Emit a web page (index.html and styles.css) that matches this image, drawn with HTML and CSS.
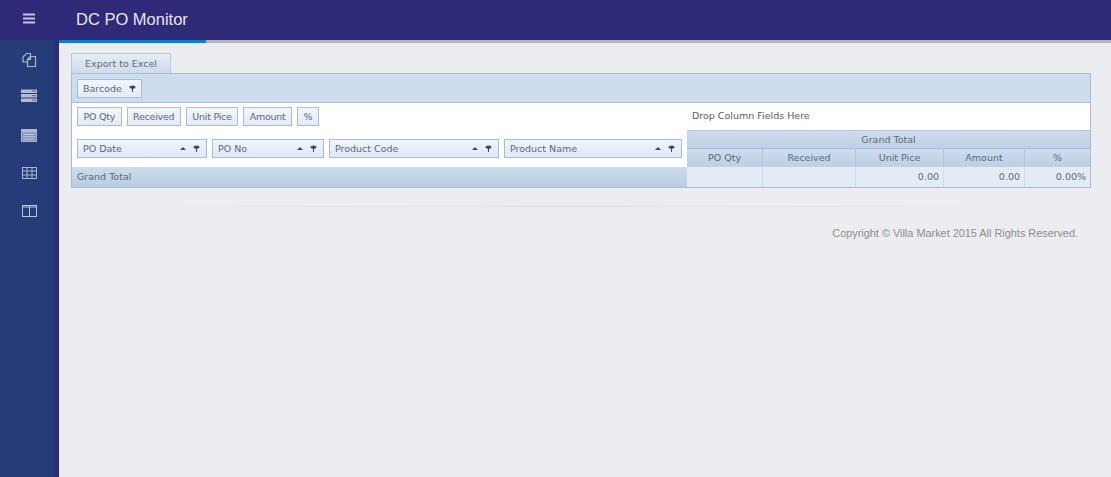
FILE: index.html
```html
<!DOCTYPE html>
<html lang="en">
<head>
<meta charset="utf-8">
<title>DC PO Monitor</title>
<link rel="stylesheet" href="styles.css">
</head>
<body>
<div class="app">
  <header class="topbar">
    <div class="burger">
      <svg class="icon-burger" width="14" height="12" viewBox="0 0 14 12"><path d="M1 1.500h12M1 5.500h12M1 9.500h12" stroke="#c3c5dc" stroke-width="2" fill="none"/></svg>
    </div>
    <div class="title">DC PO Monitor</div>
  </header>
  <div class="main">
    <nav class="sidebar">
      <svg class="nav-icon n1" width="16" height="16" viewBox="0 0 16 16" fill="none" stroke="#a9b6d0" stroke-width="1.200"><path d="M5.500 1.500h4v3l-3 3v2.500h-4.500V5z"/><path d="M9.500 4.500h5v10h-8v-7z"/><path d="M9.500 4.500v3h-3"/></svg>
      <svg class="nav-icon n2" width="16" height="13" viewBox="0 0 16 13"><rect y="0.500" width="16" height="3.500" fill="#b1bcd4"/><rect y="5" width="16" height="3.500" fill="#b1bcd4"/><rect y="9.500" width="16" height="3.500" fill="#b1bcd4"/><path d="M11 2h4M11 6.700h4M11 11.200h4" stroke="#4f6593"/></svg>
      <svg class="nav-icon n3" width="16" height="13" viewBox="0 0 16 13"><rect x="0.500" y="0.500" width="15" height="12" fill="#7f90b4" stroke="#a9b6d0"/><rect x="1" y="1" width="14" height="2.500" fill="#b1bcd4"/><path d="M2 5.500h12M2 7.800h12M2 10.200h12" stroke="#c3cbdf" stroke-width="1"/></svg>
      <svg class="nav-icon n4" width="15" height="12" viewBox="0 0 15 12" fill="none" stroke="#a9b6d0"><rect x="0.500" y="0.500" width="14" height="11"/><path d="M0.500 4h14M0.500 8h14M5 0.500v11M10 0.500v11"/></svg>
      <svg class="nav-icon" width="15" height="12" viewBox="0 0 15 12" fill="none" stroke="#b9c3da"><rect x="0.500" y="0.500" width="14" height="11"/><path d="M7.500 0.500v11M0.500 2h14"/></svg>
    </nav>
    <div class="strip"></div>
    <div class="page">
      <div class="progress"><div class="progress-fill"></div></div>
      <div class="content">
        <button class="export">Export to Excel</button>
        <div class="pivot">
          <div class="filter-row">
            <div class="chip chip-filter">Barcode
              <svg width="7" height="7" viewBox="0 0 7 7"><use href="#pin"/></svg>
            </div>
          </div>
          <div class="body">
            <div class="left">
              <div class="data-fields">
                <div class="chip">PO Qty</div>
                <div class="chip">Received</div>
                <div class="chip">Unit Pice</div>
                <div class="chip">Amount</div>
                <div class="chip">%</div>
              </div>
              <div class="row-fields">
                <div class="field f1"><span>PO Date</span><i class="up"></i><svg width="7" height="7" viewBox="0 0 7 7"><use href="#pin"/></svg></div>
                <div class="field f2"><span>PO No</span><i class="up"></i><svg width="7" height="7" viewBox="0 0 7 7"><use href="#pin"/></svg></div>
                <div class="field f3"><span>Product Code</span><i class="up"></i><svg width="7" height="7" viewBox="0 0 7 7"><use href="#pin"/></svg></div>
                <div class="field f4"><span>Product Name</span><i class="up"></i><svg width="7" height="7" viewBox="0 0 7 7"><use href="#pin"/></svg></div>
              </div>
              <div class="grand">Grand Total</div>
            </div>
            <div class="right">
              <div class="drop">Drop Column Fields Here</div>
              <div class="gt-head">Grand Total</div>
              <div class="cols heads">
                <div>PO Qty</div><div>Received</div><div>Unit Pice</div><div>Amount</div><div class="pct">%</div>
              </div>
              <div class="cols vals">
                <div></div><div></div><div>0.00</div><div>0.00</div><div>0.00%</div>
              </div>
            </div>
          </div>
        </div>
        <div class="rule"></div>
        <div class="copy">Copyright © Villa Market 2015 All Rights Reserved.</div>
      </div>
    </div>
  </div>
</div>
<svg class="defs" width="0" height="0"><defs><g id="pin"><ellipse cx="3.500" cy="2" rx="3" ry="1.600" fill="#3f4a5c"/><path d="M2.300 3h2.400L4 4.500V7H3V4.500z" fill="#3f4a5c"/></g></defs></svg>
</body>
</html>
```
FILE: styles.css
```css
* { box-sizing: border-box; }
html, body { margin: 0; height: 100%; overflow: hidden; }
body { font-family: "DejaVu Sans", Verdana, sans-serif; font-size: 9.500px; color: #626872; background: #ebedf1; }
.app { display: flex; flex-direction: column; height: 477px; }
.topbar { display: flex; height: 40px; background: #2f2a78; flex: none; }
.burger { width: 59px; display: flex; align-items: center; justify-content: center; border-right: 1px solid #2b2d6e; padding-bottom: 2px; }
.title { font-family: "Liberation Sans", Arial, sans-serif; font-size: 16.500px; color: #e6e7f2; padding-left: 17px; line-height: 39px; }
.main { display: flex; flex: 1; min-height: 0; }
.sidebar { width: 55px; background: #263c78; display: flex; flex-direction: column; align-items: center; padding-top: 12px; flex: none; }
.nav-icon { display: block; flex: none; margin-left: 3px; }
.n1 { margin-bottom: 21px; }
.n2 { margin-bottom: 27px; }
.n3 { margin-bottom: 25px; }
.n4 { margin-bottom: 26px; }
.strip { width: 4px; background: #2f2a78; flex: none; }
.page { flex: 1; min-width: 0; }
.progress { height: 3px; background: #b5b6ba; }
.progress-fill { width: 147px; height: 3px; background: #0f7dc4; }
.content { padding: 10px 20px 0 12px; }
.export { display: block; width: 100px; height: 20px; padding: 0; font: inherit; color: #626872; background: linear-gradient(#e6edf6, #cddcee); border: 1px solid #b8c8da; border-bottom: 0; }
.pivot { width: 1020px; border: 1px solid #a9bdd4; background: #fff; }
.filter-row { height: 29px; background: #cddcee; border-bottom: 1px solid #a9bdd4; padding: 5px; display: flex; align-items: flex-start; }
.chip { height: 19px; display: flex; align-items: center; padding: 0 5.500px; letter-spacing: -0.250px; background: linear-gradient(#f2f6fb, #e3ebf6); border: 1px solid #a9bdd4; }
.chip-filter { gap: 7px; padding: 0 5px; letter-spacing: 0; }
.body { display: grid; grid-template-columns: 615px 403px; }
.left { display: flex; flex-direction: column; }
.data-fields { display: flex; gap: 5px; padding: 4px 5px 0; height: 36px; }
.row-fields { display: flex; gap: 5px; padding-left: 5px; height: 28px; }
.field { height: 19px; display: flex; align-items: center; padding: 0 6px 1px 5px; background: linear-gradient(#eef4fc, #dfe9f6); border: 1px solid #a9bdd4; }
.field span { flex: 1; }
.up { width: 0; height: 0; border-left: 3px solid transparent; border-right: 3px solid transparent; border-bottom: 3px solid #3f4a5c; margin-right: 7px; }
.f1 { width: 130px; }
.f2 { width: 112px; }
.f3 { width: 170px; }
.f4 { width: 178px; }
.grand { height: 20px; line-height: 20px; padding-left: 5px; background: linear-gradient(#cddcee, #b9cde2); }
.right { display: flex; flex-direction: column; }
.drop { height: 26px; line-height: 25px; padding-left: 5px; color: #5e5a6a; }
.gt-head { height: 19px; line-height: 18px; text-align: center; background: linear-gradient(#cddcee, #bed0e5); border-bottom: 1px solid #a9bdd4; border-top: 1px solid #b2c4d9; margin-top: 1px; }
.cols { display: grid; grid-template-columns: 76px 93px 88px 81px 65px; }
.heads { height: 18px; line-height: 17px; text-align: center; background: linear-gradient(#cddcee, #bed0e5); border-bottom: 1px solid #c3d2e3; }
.heads div { border-right: 1px solid #b2c4d9; }
.heads .pct { border-right: 0; }
.vals { height: 20px; line-height: 20px; text-align: right; background: #e3ebf5; }
.vals div { padding-right: 4px; border-right: 1px solid #cfdce9; }
.vals div:last-child { border-right: 0; }
.rule { height: 1px; margin: 18px 60px 0 40px; background: linear-gradient(90deg, #ebedf1, #dcdee3 50%, #ebedf1); }
.copy { font-family: "Liberation Sans", Arial, sans-serif; font-size: 10.900px; color: #8b8d92; text-align: right; padding: 19px 13px 0 0; line-height: 14px; width: 1020px; }
.defs { position: absolute; }
```
